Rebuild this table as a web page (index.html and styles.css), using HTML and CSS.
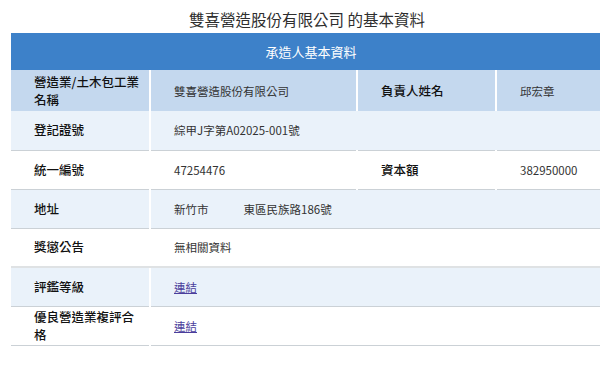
FILE: index.html
```html
<!DOCTYPE html>
<html lang="zh-Hant">
<head>
<meta charset="utf-8">
<link rel="stylesheet" href="styles.css">
</head>
<body>
<div class="page">
  <h1 class="title">雙喜營造股份有限公司 的基本資料</h1>
  <table class="info">
    <colgroup>
      <col class="c1"><col class="c2"><col class="c3"><col class="c4">
    </colgroup>
    <thead>
      <tr><th colspan="4" class="head">承造人基本資料</th></tr>
    </thead>
    <tbody>
      <tr class="top">
        <td class="lbl">營造業/土木包工業名稱</td>
        <td class="val">雙喜營造股份有限公司</td>
        <td class="lbl">負責人姓名</td>
        <td class="val">邱宏章</td>
      </tr>
      <tr class="alt">
        <td class="lbl">登記證號</td>
        <td class="val" colspan="3">綜甲J字第A02025-001號</td>
      </tr>
      <tr>
        <td class="lbl">統一編號</td>
        <td class="val">47254476</td>
        <td class="lbl">資本額</td>
        <td class="val">382950000</td>
      </tr>
      <tr class="alt">
        <td class="lbl">地址</td>
        <td class="val" colspan="3">新竹市<span class="gap"></span>東區民族路186號</td>
      </tr>
      <tr class="thick">
        <td class="lbl">獎懲公告</td>
        <td class="val" colspan="3">無相關資料</td>
      </tr>
      <tr class="alt">
        <td class="lbl">評鑑等級</td>
        <td class="val" colspan="3"><a href="#" class="link">連結</a></td>
      </tr>
      <tr>
        <td class="lbl">優良營造業複評合格</td>
        <td class="val" colspan="3"><a href="#" class="link">連結</a></td>
      </tr>
    </tbody>
  </table>
</div>
</body>
</html>
```
FILE: styles.css
```css
html, body {
  margin: 0;
  padding: 0;
  overflow: hidden;
  background: #fff;
}
body {
  font-family: "Noto Sans CJK TC", "Noto Sans", sans-serif;
  color: #222;
}
.page {
  padding-left: 11px;
  width: 600px;
}
.title {
  margin: 0;
  padding-top: 9px;
  height: 24px;
  line-height: 20px;
  font-size: 15.5px;
  font-weight: normal;
  color: #2e2e2e;
  text-align: center;
  padding-right: 8px;
}
.info {
  width: 600px;
  border-collapse: collapse;
  table-layout: fixed;
}
.c1 { width: 139px; }
.c2 { width: 207px; }
.c3 { width: 139px; }
.c4 { width: 115px; }
.head {
  background: #3d81c9;
  color: #fff;
  font-weight: normal;
  font-size: 13px;
  height: 37px;
  padding: 0;
  text-align: center;
}
.info td {
  height: 39px;
  padding: 0 6px 0 23px;
  vertical-align: middle;
  border-bottom: 1px solid #cbd1d6;
  box-sizing: border-box;
}
.info td + td {
  border-left: 2px solid #fff;
}
.top td {
  background: #c4d8ee;
  height: 41px;
  border-bottom: none;
}
.alt td {
  background: #eaf2fa;
}
.thick td {
  border-bottom: 2px solid #dfe2e4;
}
.lbl {
  font-size: 12.5px;
  line-height: 18px;
  color: #111;
  font-weight: 500;
}
.val {
  font-size: 11.5px;
  color: #333;
}
.gap {
  display: inline-block;
  width: 35px;
}
.link {
  color: #4b3e9c;
  text-decoration: underline;
}
```
